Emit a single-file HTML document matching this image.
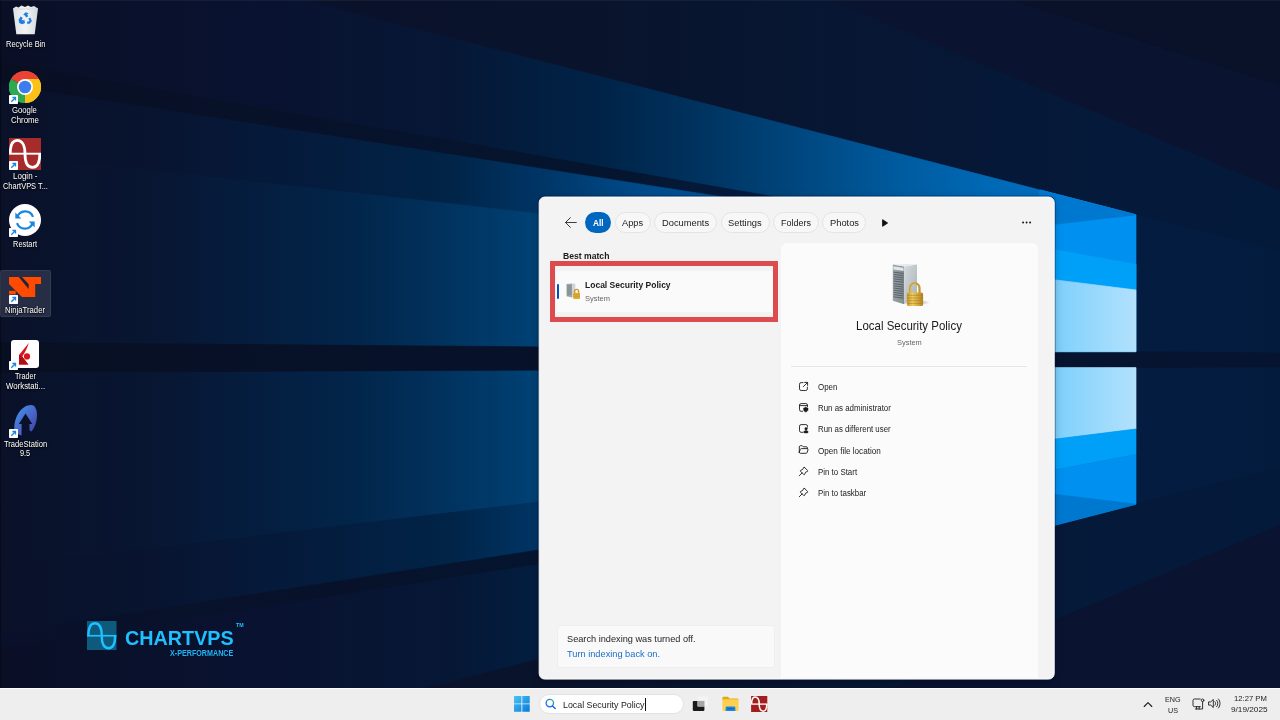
<!DOCTYPE html>
<html lang="en">
<head>
<meta charset="utf-8">
<title>Desktop - Search: Local Security Policy</title>
<style>
*{box-sizing:border-box;margin:0;padding:0}
html,body{width:1280px;height:720px;overflow:hidden;background:#0a1128;font-family:"Liberation Sans","DejaVu Sans",sans-serif;}
#desk{position:absolute;left:0;top:0;width:1280px;height:720px;overflow:hidden;will-change:transform}
#wall{position:absolute;left:0;top:0;width:1280px;height:720px;display:block}
.t{position:absolute;white-space:nowrap;transform-origin:0 0;line-height:1}
.sh{text-shadow:0 1px 1.500px rgba(0,0,0,.95),0 0 2px rgba(0,0,0,.7)}
/* desktop icons */
.ico{position:absolute}
.lbl{position:absolute;white-space:nowrap;color:#fff;font-size:9px;line-height:10px;text-align:center;transform-origin:50% 0;text-shadow:0 1px 1px rgba(0,0,0,.9),0 0 2px rgba(0,0,0,.8)}
.sc{position:absolute;width:9px;height:9px;background:#fff;border-radius:1px}
/* panel */
#panel{position:absolute;left:538px;top:196px;width:516.300px;height:482.500px;transform:translate(.700px,.550px);background:#f3f3f3;border:1px solid #fdfdfd;border-radius:6px;box-shadow:0 0 0 1px rgba(0,18,60,.38),0 3px 8px rgba(0,0,0,.22);overflow:hidden}
#taskbar{position:absolute;left:0;top:688px;width:1280px;height:32px;background:#eeeeee;border-top:1px solid #fcfcfc}
</style>
</head>
<body>
<div id="desk">
<svg id="wall" width="1280" height="720" viewBox="0 0 1280 720">
<defs>
<linearGradient id="gsky" gradientUnits="userSpaceOnUse" x1="0" y1="0" x2="1280" y2="0"><stop offset="0.0000" stop-color="#0a0f26"/><stop offset="0.3906" stop-color="#0a132c"/><stop offset="0.7031" stop-color="#08152f"/><stop offset="1.0000" stop-color="#0a1129"/></linearGradient>
<linearGradient id="gU1" gradientUnits="userSpaceOnUse" x1="0" y1="0" x2="1280" y2="0"><stop offset="0.0000" stop-color="#0a0f26"/><stop offset="0.1953" stop-color="#091230"/><stop offset="0.3516" stop-color="#061735"/><stop offset="0.4688" stop-color="#002347"/><stop offset="0.5469" stop-color="#00335f"/><stop offset="0.6250" stop-color="#00477f"/><stop offset="0.7031" stop-color="#005b9f"/><stop offset="0.7812" stop-color="#006ab8"/><stop offset="0.8875" stop-color="#0070c4"/></linearGradient>
<linearGradient id="gD1" gradientUnits="userSpaceOnUse" x1="0" y1="0" x2="1280" y2="0"><stop offset="0.0000" stop-color="#090e22"/><stop offset="0.0469" stop-color="#080f24"/><stop offset="0.2344" stop-color="#07122a"/><stop offset="0.4844" stop-color="#05152f"/><stop offset="0.5938" stop-color="#041c40"/></linearGradient>
<linearGradient id="gU2a" gradientUnits="userSpaceOnUse" x1="0" y1="0" x2="1280" y2="0"><stop offset="0.0000" stop-color="#0a1129"/><stop offset="0.1172" stop-color="#081430"/><stop offset="0.2500" stop-color="#041c3e"/><stop offset="0.3516" stop-color="#012447"/><stop offset="0.4219" stop-color="#003566"/><stop offset="0.4969" stop-color="#004a88"/><stop offset="0.5938" stop-color="#0058a0"/></linearGradient>
<linearGradient id="gU2b" gradientUnits="userSpaceOnUse" x1="0" y1="0" x2="1280" y2="0"><stop offset="0.0000" stop-color="#0a1129"/><stop offset="0.1172" stop-color="#081632"/><stop offset="0.1953" stop-color="#051d3e"/><stop offset="0.2734" stop-color="#022549"/><stop offset="0.3359" stop-color="#01305b"/><stop offset="0.3906" stop-color="#003b6b"/><stop offset="0.4219" stop-color="#004276"/><stop offset="0.5938" stop-color="#0058a0"/></linearGradient>
<linearGradient id="gC" gradientUnits="userSpaceOnUse" x1="0" y1="0" x2="1280" y2="0"><stop offset="0.0000" stop-color="#080f22"/><stop offset="0.2344" stop-color="#071128"/><stop offset="0.4219" stop-color="#07122a"/><stop offset="0.8875" stop-color="#061430"/><stop offset="1.0000" stop-color="#061430"/></linearGradient>
<linearGradient id="gL2b" gradientUnits="userSpaceOnUse" x1="0" y1="0" x2="1280" y2="0"><stop offset="0.0000" stop-color="#0a1129"/><stop offset="0.1172" stop-color="#081632"/><stop offset="0.1953" stop-color="#051d3e"/><stop offset="0.2734" stop-color="#022549"/><stop offset="0.3359" stop-color="#01305b"/><stop offset="0.3906" stop-color="#003b6b"/><stop offset="0.4219" stop-color="#004276"/><stop offset="0.5938" stop-color="#0058a0"/></linearGradient>
<linearGradient id="gL2a" gradientUnits="userSpaceOnUse" x1="0" y1="0" x2="1280" y2="0"><stop offset="0.0000" stop-color="#0a1129"/><stop offset="0.1172" stop-color="#081430"/><stop offset="0.2500" stop-color="#041c3e"/><stop offset="0.3516" stop-color="#012447"/><stop offset="0.4219" stop-color="#003566"/><stop offset="0.4969" stop-color="#004a88"/><stop offset="0.5938" stop-color="#0058a0"/></linearGradient>
<linearGradient id="gD2" gradientUnits="userSpaceOnUse" x1="0" y1="0" x2="1280" y2="0"><stop offset="0.0000" stop-color="#0a1029"/><stop offset="0.1562" stop-color="#08122a"/><stop offset="0.2734" stop-color="#07122a"/><stop offset="0.4219" stop-color="#05152f"/><stop offset="0.5938" stop-color="#041c40"/></linearGradient>
<linearGradient id="gL1" gradientUnits="userSpaceOnUse" x1="0" y1="0" x2="1280" y2="0"><stop offset="0.0000" stop-color="#0a0f26"/><stop offset="0.1953" stop-color="#091230"/><stop offset="0.3516" stop-color="#061735"/><stop offset="0.4688" stop-color="#002347"/><stop offset="0.5469" stop-color="#00335f"/><stop offset="0.6250" stop-color="#00477f"/><stop offset="0.7031" stop-color="#005b9f"/><stop offset="0.7812" stop-color="#006ab8"/><stop offset="0.8875" stop-color="#0070c4"/></linearGradient>
<linearGradient id="gbot" gradientUnits="userSpaceOnUse" x1="0" y1="0" x2="1280" y2="0"><stop offset="0.0000" stop-color="#0a1029"/><stop offset="0.3906" stop-color="#0a1530"/><stop offset="1.0000" stop-color="#0a1430"/></linearGradient>
<linearGradient id="gRw" gradientUnits="userSpaceOnUse" x1="1136" y1="0" x2="1280" y2="0"><stop offset="0.0000" stop-color="#031c40"/><stop offset="1.0000" stop-color="#031c3e"/></linearGradient>
<linearGradient id="gLight" gradientUnits="userSpaceOnUse" x1="1040" y1="0" x2="1136" y2="0"><stop offset="0.0000" stop-color="#74cdfb"/><stop offset="1.0000" stop-color="#b2e1fd"/></linearGradient>
<linearGradient id="gskyw" gradientUnits="userSpaceOnUse" x1="560" y1="0" x2="1280" y2="0"><stop offset="0.0000" stop-color="#0a132c"/><stop offset="0.1944" stop-color="#08152f"/><stop offset="0.6111" stop-color="#061837"/><stop offset="0.8000" stop-color="#051a3b"/><stop offset="1.0000" stop-color="#041a3a"/></linearGradient>
<filter id="b1"><feGaussianBlur stdDeviation="0.6"/></filter>
</defs>
<rect width="1280" height="720" fill="url(#gsky)"/>
<polygon points="829.0,0.0 1280.0,0.0 1280.0,191.0" fill="#0a1430" stroke="#0a1430" stroke-width=".7" />
<polygon points="1012.0,0.0 1280.0,0.0 1280.0,85.0" fill="#0a122a" stroke="#0a122a" stroke-width=".7" />
<polygon points="560.0,0.0 829.0,0.0 1280.0,191.0 1280.0,251.9 1136.0,214.8 560.0,66.1" fill="url(#gskyw)" stroke="url(#gskyw)" stroke-width=".7" />
<polygon points="0.0,-78.3 1136.0,214.8 1136.0,259.7 0.0,62.1" fill="url(#gU1)" stroke="url(#gU1)" stroke-width=".7" />
<polygon points="0.0,62.1 800.0,201.3 800.0,209.0 0.0,84.4" fill="url(#gD1)" stroke="url(#gD1)" stroke-width=".7" />
<polygon points="0.0,84.4 800.0,209.0 800.0,242.9 0.0,153.3" fill="url(#gU2a)" stroke="url(#gU2a)" stroke-width=".7" />
<polygon points="0.0,153.3 800.0,242.9 800.0,349.0 0.0,342.5" fill="url(#gU2b)" stroke="url(#gU2b)" stroke-width=".7" />
<polygon points="0.0,372.3 800.0,368.9 800.0,470.7 0.0,566.7" fill="url(#gL2b)" stroke="url(#gL2b)" stroke-width=".7" />
<polygon points="0.0,566.7 800.0,470.7 800.0,509.5 0.0,633.5" fill="url(#gL2a)" stroke="url(#gL2a)" stroke-width=".7" />
<polygon points="0.0,633.5 800.0,509.5 800.0,524.0 0.0,648.0" fill="url(#gD2)" stroke="url(#gD2)" stroke-width=".7" />
<polygon points="0.0,648.0 800.0,524.0 1136.0,471.9 1136.0,504.2 0.0,797.3" fill="url(#gL1)" stroke="url(#gL1)" stroke-width=".7" />
<polygon points="1136.0,214.8 1280.0,251.9 1280.0,467.0 1136.0,504.2" fill="url(#gRw)" stroke="url(#gRw)" stroke-width=".7" />
<polygon points="1136.0,504.2 1280.0,467.0 1280.0,525.0 829.0,716.0 560.0,716.0 560.0,652.8" fill="url(#gskyw)" stroke="url(#gskyw)" stroke-width=".7" />
<polygon points="829.0,716.0 1280.0,525.0 1280.0,720.0 829.0,720.0" fill="#0a1431" stroke="#0a1431" stroke-width=".7" />
<polygon points="0.0,342.5 1280.0,352.9 1280.0,366.9 0.0,372.3" fill="url(#gC)" stroke="url(#gC)" stroke-width=".7" />
<polygon points="1040.0,190.0 1136.0,214.8 1136.0,351.7 1040.0,351.7" fill="#0090f0" stroke="#0090f0" stroke-width=".7" />
<polygon points="1040.0,190.0 1136.0,214.8 1040.0,226.0" fill="#0078d0" stroke="#0078d0" stroke-width=".7" />
<polygon points="1040.0,247.1 1136.0,264.4 1136.0,290.0 1040.0,278.0" fill="#00a0f8" stroke="#00a0f8" stroke-width=".7" />
<polygon points="1040.0,278.0 1136.0,290.0 1136.0,351.7 1040.0,351.7" fill="url(#gLight)" stroke="url(#gLight)" stroke-width=".7" />
<polygon points="1040.0,367.6 1136.0,367.6 1136.0,429.0 1040.0,441.0" fill="url(#gLight)" stroke="url(#gLight)" stroke-width=".7" />
<polygon points="1040.0,441.0 1136.0,429.0 1136.0,454.4 1040.0,472.8" fill="#00a0f8" stroke="#00a0f8" stroke-width=".7" />
<polygon points="1040.0,472.8 1136.0,454.4 1136.0,504.2 1040.0,529.0" fill="#0090f0" stroke="#0090f0" stroke-width=".7" />
<polygon points="1040.0,492.6 1136.0,504.2 1040.0,529.0" fill="#0078d0" stroke="#0078d0" stroke-width=".7" />
<rect x="0" y="0" width="1280" height="1" fill="#ffffff" opacity=".05"/><rect x="0" y="0" width="1.2" height="688" fill="#000" opacity=".3"/>
</svg>
<svg style="position:absolute;left:11px;top:4px" width="29" height="32" viewBox="0 0 29 32"><defs><linearGradient id="rb" x1="0" x2="1"><stop offset="0" stop-color="#e9edf0"/><stop offset=".5" stop-color="#ffffff"/><stop offset="1" stop-color="#dfe4e8"/></linearGradient></defs><path d="M2 4.500l3-2 2.500 1 3-2 3.500 1.500 3-1.500 3 1.500 3-1 4 2.500-3.300 25.800H5.300z" fill="url(#rb)" opacity=".95"/><path d="M2 5h25" stroke="#cfd6db" stroke-width=".8"/><g fill="#1a7fe0"><path d="M12.200 10.800l2.300-2.600 3.200 1-1.600 1 1.200 2-2.200 1.200-1.100-1.900z"/><path d="M19.300 13.600l1.600 3.400-2.200 2.800h-2.600v-2.400h1.800l.5-.8-1.100-1.900z"/><path d="M11.200 20.200l-3-1.200-.6-3.400 2.200-3 2 1.300-1.200 1.800 1.700.9.800-1.300 1 3.600z"/></g></svg>
<span class="t sh" style="left:5.80px;top:39.68px;font-size:9px;color:#ffffff;transform:scaleX(0.8310)">Recycle Bin</span>
<svg style="position:absolute;left:9.300px;top:71.100px" width="32" height="32" viewBox="0 0 48 48"><path d="M24 24L3.200 12A24 24 0 0 1 44.800 12z" fill="#ea4335"/><path d="M24 24L44.800 12A24 24 0 0 1 24 48z" fill="#fbc116"/><path d="M24 24L24 48A24 24 0 0 1 3.200 12z" fill="#2da94f"/><path d="M3.200 12A24 24 0 0 1 44.800 12H24z" fill="#ea4335"/><path d="M24 12h20.800A24 24 0 0 1 24 48l10.400-18z" fill="#fbc116"/><path d="M3.200 12l10.400 18L24 48A24 24 0 0 1 3.200 12z" fill="#2da94f"/><path d="M13.600 30L3.200 12" stroke="#2da94f"/><circle cx="24" cy="24" r="12" fill="#fff"/><circle cx="24" cy="24" r="9.400" fill="#3b7ded"/></svg>
<svg style="position:absolute;left:9.3px;top:94.5px" width="9" height="9" viewBox="0 0 9 9"><rect width="9" height="9" rx=".8" fill="#fff"/><path d="M2.300 6.700L6.300 2.700M3.400 2.500h3.100v3.100" fill="none" stroke="#1a86e0" stroke-width="1.300"/></svg>
<span class="t sh" style="left:12.00px;top:106.28px;font-size:9px;color:#ffffff;transform:scaleX(0.8577)">Google</span>
<span class="t sh" style="left:11.10px;top:116.08px;font-size:9px;color:#ffffff;transform:scaleX(0.8746)">Chrome</span>
<svg style="position:absolute;left:9.300px;top:138px" width="32" height="32" viewBox="0 0 32 32"><rect width="32" height="32" fill="#a82b2b"/><path d="M0 15.700h32" stroke="#fff" stroke-width="1.900"/><path d="M1.200 16C1.200 7 3.700 2.300 8.200 2.300S16 7 16 16s3 13.400 7.500 13.400S30.800 25 30.800 16" fill="none" stroke="#fff" stroke-width="2.800"/></svg>
<svg style="position:absolute;left:9.3px;top:161.0px" width="9" height="9" viewBox="0 0 9 9"><rect width="9" height="9" rx=".8" fill="#fff"/><path d="M2.300 6.700L6.300 2.700M3.400 2.500h3.100v3.100" fill="none" stroke="#1a86e0" stroke-width="1.300"/></svg>
<span class="t sh" style="left:13.30px;top:172.28px;font-size:9px;color:#ffffff;transform:scaleX(0.8899)">Login -</span>
<span class="t sh" style="left:3.10px;top:182.08px;font-size:9px;color:#ffffff;transform:scaleX(0.8260)">ChartVPS T...</span>
<svg style="position:absolute;left:9.300px;top:204.400px" width="32" height="32" viewBox="0 0 32 32"><circle cx="16" cy="16" r="16" fill="#fff"/><g fill="none" stroke="#1a86e0" stroke-width="2.200"><path d="M8.200 13.500A8.300 8.300 0 0 1 24 12.800"/><path d="M23.800 18.500A8.300 8.300 0 0 1 8 19.200"/></g><path d="M6.300 8.500v6h6z" fill="#1a86e0"/><path d="M25.700 23.500v-6h-6z" fill="#1a86e0"/></svg>
<svg style="position:absolute;left:9.3px;top:228.0px" width="9" height="9" viewBox="0 0 9 9"><rect width="9" height="9" rx=".8" fill="#fff"/><path d="M2.300 6.700L6.300 2.700M3.400 2.500h3.100v3.100" fill="none" stroke="#1a86e0" stroke-width="1.300"/></svg>
<span class="t sh" style="left:13.30px;top:239.68px;font-size:9px;color:#ffffff;transform:scaleX(0.8271)">Restart</span>
<div style="position:absolute;left:0;top:270px;width:50.700px;height:46.700px;background:rgba(205,210,225,.15);border:1px solid rgba(210,215,230,.08);border-radius:2px"></div>
<svg style="position:absolute;left:9.300px;top:277px" width="32" height="21" viewBox="0 0 32 21"><polygon points="0,0 32,0 32,7.100 26.200,7.100 26.200,20 13,20 0,7.100" fill="#ff4a00"/><polygon points="9.800,0 12.900,0 19.600,6.900 19.600,12" fill="#1c2540"/><rect x="0" y="13.800" width="6.700" height="3.600" fill="#ff4a00"/></svg>
<svg style="position:absolute;left:9.3px;top:294.5px" width="9" height="9" viewBox="0 0 9 9"><rect width="9" height="9" rx=".8" fill="#fff"/><path d="M2.300 6.700L6.300 2.700M3.400 2.500h3.100v3.100" fill="none" stroke="#1a86e0" stroke-width="1.300"/></svg>
<span class="t sh" style="left:5.30px;top:306.08px;font-size:9px;color:#ffffff;transform:scaleX(0.8568)">NinjaTrader</span>
<svg style="position:absolute;left:11.100px;top:339.800px" width="28" height="28" viewBox="0 0 28 28"><rect width="28" height="28" rx="3" fill="#fff"/><path d="M17.800 3.100L8 15.100v9.400h9.300L11.200 16.600c2.800-3.600 5-8.500 6.600-13.500z" fill="#d8141c"/><path d="M8 15.100l3.200 1.500 6.100 7.900H8z" fill="#b00d14"/><circle cx="16" cy="16.400" r="3.100" fill="#d8141c"/></svg>
<svg style="position:absolute;left:9.3px;top:360.5px" width="9" height="9" viewBox="0 0 9 9"><rect width="9" height="9" rx=".8" fill="#fff"/><path d="M2.300 6.700L6.300 2.700M3.400 2.500h3.100v3.100" fill="none" stroke="#1a86e0" stroke-width="1.300"/></svg>
<span class="t sh" style="left:15.10px;top:372.28px;font-size:9px;color:#ffffff;transform:scaleX(0.7981)">Trader</span>
<span class="t sh" style="left:5.80px;top:382.08px;font-size:9px;color:#ffffff;transform:scaleX(0.8719)">Workstati...</span>
<svg style="position:absolute;left:12px;top:404px" width="28" height="34" viewBox="0 0 28 34"><defs><linearGradient id="ts" x1="0" y1="0" x2="1" y2="1"><stop offset="0" stop-color="#3f9af0"/><stop offset=".55" stop-color="#4a63c8"/><stop offset="1" stop-color="#3b3c9c"/></linearGradient></defs><path d="M2.300 24.500C2.300 12 10 1 19 1c4.500 0 6 5 6 10 0 7-2.500 13-5.500 16.500l-2-1V20h2.800L13.500 9.500 6.800 20h2.800v11.500l-4.100-1.200c-2.200-.8-3.200-2.800-3.200-5.800z" fill="url(#ts)"/></svg>
<svg style="position:absolute;left:9.3px;top:428.5px" width="9" height="9" viewBox="0 0 9 9"><rect width="9" height="9" rx=".8" fill="#fff"/><path d="M2.300 6.700L6.300 2.700M3.400 2.500h3.100v3.100" fill="none" stroke="#1a86e0" stroke-width="1.300"/></svg>
<span class="t sh" style="left:4.00px;top:439.68px;font-size:9px;color:#ffffff;transform:scaleX(0.8417)">TradeStation</span>
<span class="t sh" style="left:20.00px;top:449.38px;font-size:9px;color:#ffffff;transform:scaleX(0.8150)">9.5</span>
<svg style="position:absolute;left:87.300px;top:620.700px" width="29.500" height="29.500" viewBox="0 0 32 32"><rect width="32" height="32" fill="#0d5a7c"/><path d="M0 16h32" stroke="#1fc0ff" stroke-width="1.800"/><path d="M1.500 16C1.500 7 4 2.500 8.500 2.500S16 7 16 16s3 13.500 7.500 13.500S30.500 25 30.500 16" fill="none" stroke="#1fc0ff" stroke-width="2.600"/></svg>
<span class="t" style="left:125.30px;top:626.82px;font-size:21px;font-weight:700;color:#1fc0ff;transform:scaleX(0.9410)">CHARTVPS</span>
<span class="t" style="left:236.10px;top:624.31px;font-size:4.6px;font-weight:700;color:#1fc0ff;transform:scaleX(1.1595)">TM</span>
<span class="t" style="left:169.70px;top:649.56px;font-size:8.2px;font-weight:700;color:#1fb6f5;transform:scaleX(0.8752)">X-PERFORMANCE</span>
<div id="panel"></div>
<div style="position:absolute;left:781px;top:242.5px;width:257px;height:435.800px;background:#fbfbfb;border-radius:6px 6px 0 0"></div>
<svg style="position:absolute;left:564px;top:216px" width="14" height="13" viewBox="0 0 14 13"><path d="M12.3 6.5H1.8M6.4 1.6L1.5 6.5l4.9 4.9" fill="none" stroke="#222" stroke-width=".880" stroke-linecap="round" stroke-linejoin="round"/></svg>
<div style="position:absolute;left:584.7px;top:212px;width:26.7px;height:21px;border-radius:10.5px;background:#0067c0"></div>
<span class="t" style="left:592.70px;top:218.07px;font-size:9.6px;font-weight:700;color:#ffffff;transform:scaleX(0.8642)">All</span>
<div style="position:absolute;left:614.5px;top:212px;width:36.6px;height:21px;border-radius:10.5px;background:#f7f7f7;border:1px solid #e4e4e4"></div>
<span class="t" style="left:622.30px;top:218.07px;font-size:9.6px;color:#1b1b1b;transform:scaleX(0.9646)">Apps</span>
<div style="position:absolute;left:654.2px;top:212px;width:63.3px;height:21px;border-radius:10.5px;background:#f7f7f7;border:1px solid #e4e4e4"></div>
<span class="t" style="left:662.40px;top:218.07px;font-size:9.6px;color:#1b1b1b;transform:scaleX(0.9705)">Documents</span>
<div style="position:absolute;left:721.0px;top:212px;width:48.8px;height:21px;border-radius:10.5px;background:#f7f7f7;border:1px solid #e4e4e4"></div>
<span class="t" style="left:728.30px;top:218.07px;font-size:9.6px;color:#1b1b1b;transform:scaleX(0.9720)">Settings</span>
<div style="position:absolute;left:773.0px;top:212px;width:46.0px;height:21px;border-radius:10.5px;background:#f7f7f7;border:1px solid #e4e4e4"></div>
<span class="t" style="left:781.00px;top:218.07px;font-size:9.6px;color:#1b1b1b;transform:scaleX(0.9375)">Folders</span>
<div style="position:absolute;left:822.2px;top:212px;width:43.9px;height:21px;border-radius:10.5px;background:#f7f7f7;border:1px solid #e4e4e4"></div>
<span class="t" style="left:829.80px;top:218.07px;font-size:9.6px;color:#1b1b1b;transform:scaleX(0.9707)">Photos</span>
<svg style="position:absolute;left:881px;top:217.500px" width="9" height="10" viewBox="0 0 9 10"><path d="M1.600 1.700L6.600 5 1.600 8.300z" fill="#111" stroke="#111" stroke-width=".9" stroke-linejoin="round"/></svg>
<svg style="position:absolute;left:1020px;top:220px" width="14" height="5" viewBox="0 0 14 5"><circle cx="3.1" cy="2.5" r="0.95" fill="#111"/><circle cx="6.6" cy="2.5" r="0.95" fill="#111"/><circle cx="10.1" cy="2.5" r="0.95" fill="#111"/></svg>
<span class="t" style="left:562.50px;top:250.87px;font-size:9.6px;font-weight:700;color:#1b1b1b;transform:scaleX(0.8972)">Best match</span>
<div style="position:absolute;left:556px;top:270.5px;width:217px;height:41.5px;background:#fafafa;border-radius:3px"></div>
<div style="position:absolute;left:557.1px;top:283.5px;width:2px;height:15.5px;border-radius:1px;background:#0050c0"></div>
<div style="position:absolute;left:550px;top:261px;width:228.3px;height:61px;border:5.5px solid #dc4b4e"></div>
<svg style="position:absolute;left:566px;top:283px" width="15" height="17" viewBox="0 0 15 17">
<polygon points="0.5,1 6,0.4 6,14.5 0.5,13.2" fill="#9ea7ac"/>
<polygon points="6,0.4 9.3,0.8 9.3,13 6,14.5" fill="#cfd4d7"/>
<path d="M1 3h4.5M1 5h4.5M1 7h4.5M1 9h4.5M1 11h4.5" stroke="#5f686e" stroke-width=".6"/>
<rect x="1.6" y="11.8" width="1.2" height="1" fill="#5bbf3a"/>
<path d="M8.6 10V8.3a2 2 0 0 1 4 0V10" fill="none" stroke="#c9952a" stroke-width="1.3"/>
<rect x="7.2" y="9.8" width="6.8" height="6.2" rx=".8" fill="#e0ad35"/>
<path d="M7.4 11.8h6.4M7.4 13.8h6.4" stroke="#b98a22" stroke-width=".5"/>
</svg>
<span class="t" style="left:584.75px;top:279.97px;font-size:9.9px;font-weight:700;color:#1b1b1b;transform:scaleX(0.8617)">Local Security Policy</span>
<span class="t" style="left:584.75px;top:294.83px;font-size:8px;color:#666666;transform:scaleX(0.9373)">System</span>
<svg style="position:absolute;left:890px;top:262px" width="40" height="46" viewBox="0 0 40 46">
<defs>
<linearGradient id="sv1" x1="0" x2="1" y1="0" y2="0"><stop offset="0" stop-color="#9aa3a8"/><stop offset="1" stop-color="#7f898f"/></linearGradient>
<linearGradient id="sv2" x1="0" x2="1" y1="0" y2="1"><stop offset="0" stop-color="#d5dadc"/><stop offset="1" stop-color="#a9b1b5"/></linearGradient>
<linearGradient id="lk" x1="0" x2="1" y1="0" y2="0"><stop offset="0" stop-color="#c9952a"/><stop offset=".35" stop-color="#f0cd5e"/><stop offset="1" stop-color="#b5821d"/></linearGradient>
<radialGradient id="shd"><stop offset="0" stop-color="#000" stop-opacity=".28"/><stop offset="1" stop-color="#000" stop-opacity="0"/></radialGradient>
</defs>
<ellipse cx="30" cy="40.5" rx="10" ry="2.6" fill="url(#shd)"/>
<polygon points="2.8,2.6 14.2,4.4 14.2,42.3 2.8,38.8" fill="url(#sv1)"/>
<polygon points="14.2,4.4 27,2.6 27,36 14.2,42.3" fill="url(#sv2)"/>
<polygon points="2.8,2.6 15.6,2.1 27,2.6 14.2,4.4" fill="#e6eaec"/>
<polygon points="3.4,4.2 13.6,5.8 13.6,9 3.4,7.6" fill="#dfe6ea"/>
<path d="M3.6 10.2l9.9 1.3M3.6 12.4l9.9 1.3M3.6 14.6l9.9 1.3M3.6 16.8l9.9 1.3M3.6 19l9.9 1.3M3.6 21.6l9.9 1.3M3.6 23.8l9.9 1.3M3.6 26l9.9 1.3M3.6 28.2l9.9 1.3M3.6 30.4l9.9 1.3M3.6 32.6l9.9 1.3M3.6 34.8l9.9 1.3" stroke="#596268" stroke-width="1"/>
<rect x="10.6" y="38.3" width="1.6" height="1.4" fill="#5bd13a"/>
<path d="M20.3 31.5V26a4.6 4.6 0 0 1 9.2 0v5.5" fill="none" stroke="#c39a2e" stroke-width="2.3"/>
<path d="M20.9 31.5V26a4 4 0 0 1 5-3.8" fill="none" stroke="#f3dc85" stroke-width=".8"/>
<rect x="16.9" y="30.4" width="16.2" height="13.6" rx="1.6" fill="url(#lk)"/>
<path d="M17 33.3h16M17 36h16M17 38.7h16M17 41.4h16" stroke="#a57a1c" stroke-width=".7" opacity=".8"/>
</svg>
<span class="t" style="left:856.30px;top:320.45px;font-size:12.7px;color:#1b1b1b;transform:scaleX(0.9046)">Local Security Policy</span>
<span class="t" style="left:896.90px;top:338.63px;font-size:8px;color:#666666;transform:scaleX(0.9298)">System</span>
<div style="position:absolute;left:791.3px;top:366px;width:236px;height:1px;background:#e6e6e6"></div>
<svg style="position:absolute;left:798.4px;top:380.5px" width="11" height="11" viewBox="0 0 11 11" fill="none" stroke="#1b1b1b" stroke-width=".9" stroke-linecap="round" stroke-linejoin="round"><path d="M5 1.6H3.2A1.7 1.7 0 0 0 1.5 3.3v4.5a1.7 1.7 0 0 0 1.7 1.7h4.5a1.7 1.7 0 0 0 1.7-1.7V6.2"/><path d="M6.6 1.4h3v3M9.4 1.6L5.4 5.6"/></svg>
<svg style="position:absolute;left:798.4px;top:401.8px" width="11" height="11" viewBox="0 0 11 11" fill="none" stroke="#1b1b1b" stroke-width=".9" stroke-linecap="round" stroke-linejoin="round"><path d="M4.6 9.3H3.1A1.6 1.6 0 0 1 1.5 7.7V3.2a1.6 1.6 0 0 1 1.6-1.6h4.8a1.6 1.6 0 0 1 1.6 1.6v1.3M1.6 3.6h7.8"/><path d="M7.8 5.3c.7.5 1.4.7 2.2.7v1.6c0 1.2-.9 2-2.2 2.5-1.300-.5-2.200-1.300-2.200-2.500V6c.8 0 1.500-.2 2.200-.7z" fill="#1b1b1b" stroke-width=".5"/></svg>
<svg style="position:absolute;left:798.4px;top:423.0px" width="11" height="11" viewBox="0 0 11 11" fill="none" stroke="#1b1b1b" stroke-width=".9" stroke-linecap="round" stroke-linejoin="round"><path d="M4.800 9.300H3.100A1.600 1.600 0 0 1 1.500 7.700V3.200a1.600 1.600 0 0 1 1.600-1.600h4.800a1.600 1.600 0 0 1 1.600 1.600v.9"/><circle cx="8" cy="5.700" r="1.250" fill="#1b1b1b" stroke-width=".4"/><path d="M5.800 9.200c0-1.200 1-1.700 2.200-1.700s2.200.5 2.200 1.700c0 .5-1 .9-2.200.9s-2.200-.4-2.200-.9z" fill="#1b1b1b" stroke-width=".4"/></svg>
<svg style="position:absolute;left:798.4px;top:444.3px" width="11" height="11" viewBox="0 0 11 11" fill="none" stroke="#1b1b1b" stroke-width=".9" stroke-linecap="round" stroke-linejoin="round"><path d="M1.300 8V2.900c0-.7.500-1.200 1.200-1.200h1.700l1.100 1.100h3c.7 0 1.200.5 1.200 1.200v.500"/><path d="M1.300 8.100l1-2.700c.2-.5.600-.8 1.100-.8h5.800c.6 0 1 .5.800 1.100l-.8 2.700c-.2.600-.6.900-1.200.9H2.300c-.6 0-1-.5-1-1.200z"/></svg>
<svg style="position:absolute;left:798.4px;top:465.7px" width="11" height="11" viewBox="0 0 11 11" fill="none" stroke="#1b1b1b" stroke-width=".9" stroke-linecap="round" stroke-linejoin="round"><path d="M6.500 1.400l3.100 3.100c.3.300.2.800-.2 1l-1.800.7-1.100 2.300c-.1.300-.5.300-.7.100L2.400 5.200c-.2-.2-.2-.6.100-.7l2.300-1.100.7-1.800c.2-.4.700-.5 1-.2zM4.100 6.900L1.300 9.700"/></svg>
<svg style="position:absolute;left:798.4px;top:486.8px" width="11" height="11" viewBox="0 0 11 11" fill="none" stroke="#1b1b1b" stroke-width=".9" stroke-linecap="round" stroke-linejoin="round"><path d="M6.500 1.400l3.100 3.100c.3.300.2.800-.2 1l-1.800.7-1.100 2.300c-.1.300-.5.300-.7.100L2.400 5.200c-.2-.2-.2-.6.100-.7l2.300-1.100.7-1.800c.2-.4.700-.5 1-.2zM4.100 6.900L1.300 9.700"/></svg>
<span class="t" style="left:817.90px;top:383.07px;font-size:8.3px;color:#1b1b1b;transform:scaleX(0.9558)">Open</span>
<span class="t" style="left:817.90px;top:404.17px;font-size:8.3px;color:#1b1b1b;transform:scaleX(0.9522)">Run as administrator</span>
<span class="t" style="left:817.90px;top:425.27px;font-size:8.3px;color:#1b1b1b;transform:scaleX(0.9444)">Run as different user</span>
<span class="t" style="left:817.90px;top:446.57px;font-size:8.3px;color:#1b1b1b;transform:scaleX(0.9793)">Open file location</span>
<span class="t" style="left:817.90px;top:467.97px;font-size:8.3px;color:#1b1b1b;transform:scaleX(0.9526)">Pin to Start</span>
<span class="t" style="left:817.90px;top:488.97px;font-size:8.3px;color:#1b1b1b;transform:scaleX(0.9500)">Pin to taskbar</span>
<div style="position:absolute;left:557.3px;top:625.2px;width:217.4px;height:42.6px;background:#f9f9f9;border:1px solid #eeeeee;border-radius:3px"></div>
<span class="t" style="left:566.90px;top:634.47px;font-size:9.6px;color:#1f1f1f;transform:scaleX(0.9581)">Search indexing was turned off.</span>
<span class="t" style="left:566.90px;top:648.67px;font-size:9.6px;color:#1a6fc9;transform:scaleX(0.9616)">Turn indexing back on.</span>
<div id="taskbar"></div>
<svg style="position:absolute;left:513.7px;top:696.4px" width="16" height="16" viewBox="0 0 16 16"><defs><linearGradient id="wl" x1="0" y1="0" x2="1" y2="1"><stop offset="0" stop-color="#47c6f7"/><stop offset="1" stop-color="#0a78d6"/></linearGradient></defs><path d="M0 0h7.400v7.400H0zM8.300 0h7.400v7.400H8.300zM0 8.300h7.400v7.400H0zM8.300 8.300h7.400v7.400H8.300z" fill="url(#wl)"/></svg>
<div style="position:absolute;left:538.7px;top:693.7px;width:145px;height:20.4px;border-radius:10.2px;background:#ffffff;border:1px solid #e2e2e2"></div>
<svg style="position:absolute;left:544px;top:697px" width="13" height="13" viewBox="0 0 13 13"><defs><linearGradient id="sg" x1="0" y1="1" x2="1" y2="0"><stop offset="0" stop-color="#1766e0"/><stop offset=".6" stop-color="#1a7fe6"/><stop offset="1" stop-color="#35c35a"/></linearGradient></defs><circle cx="5.800" cy="6.100" r="3.700" fill="none" stroke="url(#sg)" stroke-width="1.300"/><path d="M8.500 8.900l2.700 2.700" stroke="#1766e0" stroke-width="1.400" stroke-linecap="round"/></svg>
<span class="t" style="left:562.90px;top:699.57px;font-size:9.6px;color:#1b1b1b;transform:scaleX(0.9207)">Local Security Policy</span>
<div style="position:absolute;left:645.2px;top:697.5px;width:1px;height:13px;background:#111"></div>
<svg style="position:absolute;left:692px;top:696px" width="17" height="16" viewBox="0 0 17 16"><rect x=".8" y="4.900" width="11.600" height="10" rx=".8" fill="#1a1a1a"/><rect x="5.500" y=".5" width="10.600" height="10" rx=".8" fill="#f4f4f4" fill-opacity=".92"/><rect x="5.500" y="4.900" width="6.900" height="5.600" fill="#a6a6a6"/><rect x="2.600" y="6.400" width="8" height="6.600" fill="none"/></svg>
<svg style="position:absolute;left:721.500px;top:696px" width="17" height="16" viewBox="0 0 17 16"><path d="M.4 2.200c0-.8.600-1.400 1.400-1.400h4.100l1.700 1.700H15c.8 0 1.400.6 1.400 1.400v.8H.4z" fill="#e5a50a"/><rect x=".4" y="3.300" width="16.200" height="11.600" rx="1.100" fill="#ffd04f"/><path d="M3.600 12c0-.8.600-1.400 1.400-1.400h7c.8 0 1.400.6 1.400 1.400v2.900H3.600z" fill="#1787e0"/><rect x="5.200" y="12.300" width="6.600" height="1" rx=".5" fill="#0c62b5"/></svg>
<svg style="position:absolute;left:751.200px;top:695.800px" width="16.400" height="16.200" viewBox="0 0 32 32"><rect width="32" height="32" fill="#a31f1f"/><path d="M0 16h32" stroke="#fff" stroke-width="2.600"/><path d="M1 16C1 7 3.500 2 8 2s8 5 8 14 3.500 14 8 14 7-5 7-14" fill="none" stroke="#fff" stroke-width="3"/></svg>
<svg style="position:absolute;left:1142.500px;top:700.600px" width="10" height="7" viewBox="0 0 10 7"><path d="M1.200 5.500L5 1.700l3.800 3.800" fill="none" stroke="#1b1b1b" stroke-width="1.100" stroke-linecap="round" stroke-linejoin="round"/></svg>
<span class="t" style="left:1164.80px;top:695.97px;font-size:7.6px;color:#1b1b1b;transform:scaleX(0.9472)">ENG</span>
<span class="t" style="left:1167.70px;top:706.87px;font-size:7.6px;color:#1b1b1b;transform:scaleX(0.9467)">US</span>
<svg style="position:absolute;left:1191.500px;top:697.500px" width="13" height="12" viewBox="0 0 13 12" fill="none" stroke="#1b1b1b" stroke-width=".9" stroke-linecap="round" stroke-linejoin="round"><path d="M8.300 1H2.400C1.600 1 1 1.600 1 2.400v4.900c0 .8.600 1.400 1.400 1.400h6"/><circle cx="10.600" cy="2.300" r="1.300"/><path d="M10.600 3.600v7.400H3.400M4.600 8.700v2.300M7.200 8.700v2.300"/></svg>
<svg style="position:absolute;left:1207.800px;top:698.200px" width="13" height="11" viewBox="0 0 13 11" fill="none" stroke="#1b1b1b" stroke-width=".9" stroke-linecap="round" stroke-linejoin="round"><path d="M1 3.900h1.700L5.300 1.500v8L2.700 7.100H1z"/><path d="M7 3.700c.8.900.8 2.700 0 3.600M8.700 2.300c1.500 1.600 1.500 4.800 0 6.400M10.400 1c2.200 2.300 2.200 6.700 0 9"/></svg>
<span class="t" style="left:1234.30px;top:695.43px;font-size:8px;color:#1b1b1b;transform:scaleX(0.9577)">12:27 PM</span>
<span class="t" style="left:1230.50px;top:705.93px;font-size:8px;color:#1b1b1b;transform:scaleX(1.0283)">9/19/2025</span>
</div>
</body>
</html>
